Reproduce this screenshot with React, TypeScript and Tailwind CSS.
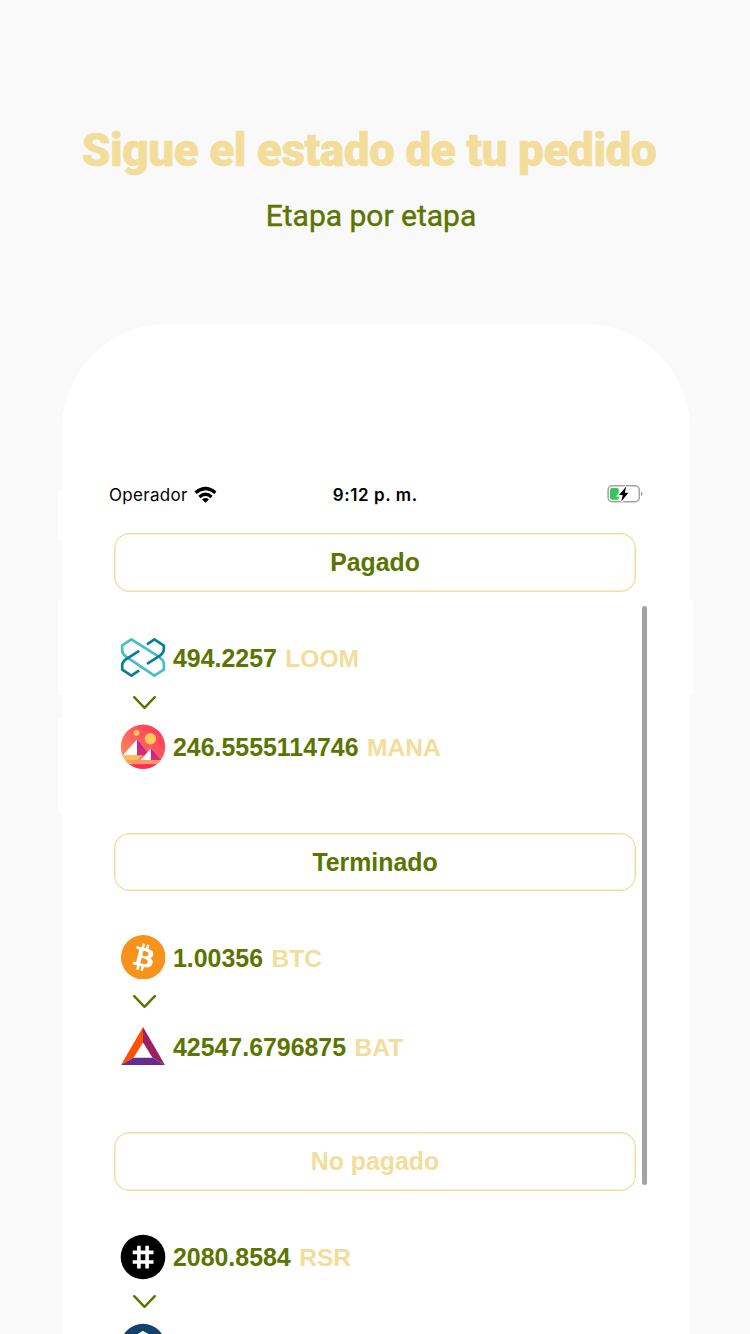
import type { ReactNode } from "react";

function LoomIcon() {
  return (
    <svg viewBox="0 0 46 46" className="size-[46px]" fill="none" strokeWidth="2.7" strokeLinejoin="round">
      <path d="M11.4 4.4L38 21.2Q43.8 25.5 43.8 28V34.6L34.4 40.6L6 21.6Q2.2 18.6 2.2 16V10.4Z" stroke="#48bec8" />
      <path d="M19.2 15.8L6.5 23.8Q2.2 27 2.2 30V34.6L11.4 40.6L19.2 35.4" stroke="#087f98" />
      <path d="M27 9.4L34.4 4.4L43.8 10.6V14.6Q43.8 18 40 20.6L27 28.8" stroke="#087f98" />
    </svg>
  );
}

function ManaIcon() {
  return (
    <svg viewBox="0 0 46 46" className="size-[46px]">
      <defs>
        <linearGradient id="mana" x1="0" y1="1" x2="1" y2="0">
          <stop offset="0" stopColor="#ff9a55" />
          <stop offset=".55" stopColor="#ff5d60" />
          <stop offset="1" stopColor="#ff2d55" />
        </linearGradient>
        <linearGradient id="slope" x1="0" y1="0" x2="0" y2="1">
          <stop stopColor="#a524b3" />
          <stop offset="1" stopColor="#e02d6a" />
        </linearGradient>
        <clipPath id="disc"><circle cx="23" cy="22.7" r="22.2" /></clipPath>
      </defs>
      <g clipPath="url(#disc)">
        <rect width="46" height="46" fill="url(#mana)" />
        <circle cx="16.5" cy="8.8" r="2.9" fill="#ffc95b" />
        <circle cx="30.4" cy="14.8" r="5.7" fill="#ffc95b" />
        <path d="M17 15.5V31.5H30Z" fill="url(#slope)" />
        <path d="M17 15.5V31.5H2.5Z" fill="#fff" />
        <path d="M0 31.5H22L18 36H0Z" fill="#ffbd58" />
        <path d="M30.8 24.5V36H41Z" fill="url(#slope)" />
        <path d="M30.8 24.5V36H20.5Z" fill="#fff" />
        <path d="M4 36H43L39 40.2H7Z" fill="#fc9965" />
        <path d="M7 40.2H39L32 46H14Z" fill="#ff2d55" />
      </g>
    </svg>
  );
}

function BtcIcon() {
  return (
    <svg viewBox="0 0 32 32" className="size-[44.5px]">
      <circle cx="16" cy="16" r="16" fill="#f7931a" />
      <path fill="#fff" d="M23.189 14.02c.314-2.096-1.283-3.223-3.465-3.975l.708-2.84-1.728-.43-.69 2.765c-.454-.114-.92-.22-1.385-.326l.695-2.783L15.596 6l-.708 2.839c-.376-.086-.746-.17-1.104-.26l.002-.009-2.384-.595-.46 1.846s1.283.294 1.256.312c.7.175.826.638.805 1.006l-.806 3.235c.048.012.11.03.18.057l-.183-.045-1.13 4.532c-.086.212-.303.531-.793.41.018.025-1.256-.313-1.256-.313l-.858 1.978 2.25.561c.418.105.828.215 1.231.318l-.715 2.872 1.727.43.708-2.84c.472.127.93.245 1.378.357l-.706 2.828 1.728.43.715-2.866c2.948.558 5.164.333 6.097-2.333.752-2.146-.037-3.385-1.588-4.192 1.13-.26 1.98-1.003 2.207-2.538zm-3.95 5.538c-.533 2.147-4.148.986-5.32.695l.95-3.805c1.172.293 4.929.872 4.37 3.11zm.535-5.569c-.487 1.953-3.495.96-4.47.717l.86-3.45c.975.243 4.118.696 3.61 2.733z" />
    </svg>
  );
}

function BatIcon() {
  return (
    <svg viewBox="0 0 46 46" className="size-[46px]">
      <path d="M23 4L1 42L13.5 34.8L23 19.2Z" fill="#ff5000" />
      <path d="M23 4V19.2L32.5 34.8L45 42Z" fill="#9e1f63" />
      <path d="M1 42H45L32.5 34.8H13.5Z" fill="#662d91" />
    </svg>
  );
}

function RsrIcon() {
  return (
    <svg viewBox="0 0 46 46" className="size-[46px]">
      <circle cx="23" cy="23" r="22.3" fill="#000" />
      <path d="M18.9 11.7V34.6M27.1 11.7V34.6M12.7 18.4H33.5M12.7 28H33.5" stroke="#fff" strokeWidth="3.6" />
    </svg>
  );
}

function HexIcon() {
  return (
    <svg viewBox="0 0 46 46" className="size-[46px]">
      <circle cx="23" cy="23" r="22.3" fill="#12426b" />
      <path d="M23 9L35 16V30L23 37L11 30V16Z" fill="none" stroke="#fff" strokeWidth="2" />
    </svg>
  );
}

function WifiIcon() {
  return (
    <svg viewBox="0 0 24 18" className="mb-px ml-[6px] h-[18px] w-6" fill="none" stroke="#000" strokeWidth="3.3">
      <path d="M1.6 6.7Q11.5 -1.6 21.4 6.7" />
      <path d="M5.4 10.9Q11.5 5.6 17.6 10.9" />
      <path d="M8 13.4Q11.5 10.8 15 13.4L11.5 16.8Z" fill="#000" stroke="none" />
    </svg>
  );
}

function BatteryIcon() {
  return (
    <svg viewBox="0 0 36 20" className="mr-px mb-[2px] h-5 w-9">
      <rect x="1.1" y="1.8" width="31.2" height="16" rx="4.2" fill="none" stroke="#a3a3a3" strokeWidth="1.5" />
      <path d="M34 7.5Q35.6 8 35.6 9.8T34 12Z" fill="#a3a3a3" />
      <rect x="3" y="4" width="8.8" height="11.8" rx="2" fill="#34c759" />
      <path d="M19.2 2.6L12 11H15.7L14.3 17.6L21.4 8.8H17.8Z" fill="#000" stroke="#fff" strokeWidth="2.8" paintOrder="stroke" />
    </svg>
  );
}

function Row({ icon, amount, coin }: { icon: ReactNode; amount?: string; coin?: string }) {
  return (
    <div className="flex h-[46px] items-center">
      <div className="flex w-[46px] justify-center">{icon}</div>
      {amount && (
        <p className="ml-[7px] flex items-baseline gap-[8.5px] pt-[2px] text-[24.9px] leading-[30px] font-bold text-[#5a7500]">
          <span>{amount}</span>
          <span className="text-[24.6px] text-[#f3dd9b]">{coin}</span>
        </p>
      )}
    </div>
  );
}

function Order({ title, muted = false, from, to }: { title: string; muted?: boolean; from: ReactNode; to: ReactNode }) {
  return (
    <section className="h-[299.6px] shrink-0">
      <h2 className={`flex h-[58.5px] items-center justify-center rounded-[15px] border border-[#f3dd9b] pt-px text-[24.85px] font-bold shadow-[inset_0_0_0_0.5px_#f3dd9b] ${muted ? "text-[#f3dd9b]" : "text-[#5a7500]"}`}>
        {title}
      </h2>
      <div className="pt-[43px] pl-[6px]">
        {from}
        <svg viewBox="0 0 24 43" className="ml-3 h-[43px] w-6" fill="none" stroke="#5a7500" strokeWidth="2.4" strokeLinecap="round" strokeLinejoin="round">
          <path d="M2.2 16.2L12.5 26.8L22.8 16.2" />
        </svg>
        {to}
      </div>
    </section>
  );
}

export default function App() {
  return (
    <main className="flex h-[1334px] w-[750px] flex-col overflow-hidden bg-[#f9f9f9] font-['Liberation_Sans',sans-serif]">
      <header className="h-[324px] shrink-0 pt-[120px] text-center font-['Roboto',sans-serif]">
        <h1 className="mr-[12px] text-[46px] leading-[60px] font-black tracking-[-0.5px] whitespace-nowrap text-[#f3dd9b] [-webkit-text-stroke:0.6px_#f3dd9b]">Sigue el estado de tu pedido</h1>
        <p className="mt-[20px] mr-[8px] text-[30px] leading-[32px] text-[#5a7500] [-webkit-text-stroke:0.4px_#5a7500]">Etapa por etapa</p>
      </header>
      <div className="relative ml-[62px] h-[1010px] w-[628px] rounded-t-[105px] bg-white pt-[156px]">
        <span className="absolute top-[166px] -left-[4px] h-[50px] w-[4px] rounded-l-[2px] bg-white" />
        <span className="absolute top-[276px] -left-[4px] h-[95px] w-[4px] rounded-l-[2px] bg-white" />
        <span className="absolute top-[394px] -left-[4px] h-[95px] w-[4px] rounded-l-[2px] bg-white" />
        <span className="absolute top-[276px] -right-[3px] h-[95px] w-[3px] rounded-r-[2px] bg-white" />
        <span className="absolute top-[282px] left-[580px] h-[579px] w-[4.5px] rounded-full bg-[#a3a3a3]" />
        <div className="mr-[46px] ml-[47px] grid h-[30px] grid-cols-3 items-center font-['Inter',sans-serif] text-[17px] text-black">
          <div className="flex items-center tracking-[0.3px]"><span className="pt-0.5">Operador</span><WifiIcon /></div>
          <div className="pt-0.5 pr-[2.5px] text-center font-semibold tracking-[0.6px]">9:12 p. m.</div>
          <div className="flex justify-end"><BatteryIcon /></div>
        </div>
        <div className="mr-[54px] ml-[52px] flex h-[824px] flex-col overflow-hidden pt-[23px]">
          <Order title="Pagado" from={<Row icon={<LoomIcon />} amount="494.2257" coin="LOOM" />} to={<Row icon={<ManaIcon />} amount="246.5555114746" coin="MANA" />} />
          <Order title="Terminado" from={<Row icon={<BtcIcon />} amount="1.00356" coin="BTC" />} to={<Row icon={<BatIcon />} amount="42547.6796875" coin="BAT" />} />
          <Order title="No pagado" muted from={<Row icon={<RsrIcon />} amount="2080.8584" coin="RSR" />} to={<Row icon={<HexIcon />} />} />
        </div>
      </div>
    </main>
  );
}
